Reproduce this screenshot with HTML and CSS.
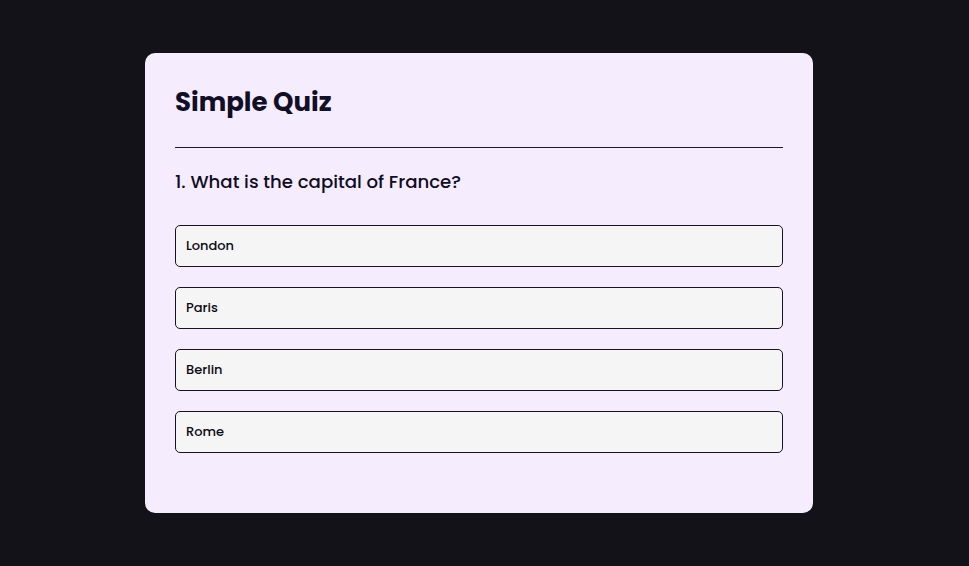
FILE: index.html
```html
<!DOCTYPE html>
<html lang="en">
<head>
<meta charset="utf-8">
<title>Simple Quiz</title>
<link rel="stylesheet" href="styles.css">
</head>
<body>
<div class="page">
  <div class="card">
    <h1 class="title">Simple Quiz</h1>
    <div class="quiz">
      <h2 class="question">1. What is the capital of France?</h2>
      <div class="answers">
        <button class="answer">London</button>
        <button class="answer">Paris</button>
        <button class="answer">Berlin</button>
        <button class="answer">Rome</button>
      </div>
    </div>
  </div>
</div>
</body>
</html>
```
FILE: styles.css
```css
* { box-sizing: border-box; }
html, body { margin: 0; padding: 0; }
body {
  background: #131218;
  font-family: "Poppins", Inter, "Open Sans", sans-serif;
}
.page {
  width: 969px;
  height: 566px;
  display: flex;
  align-items: center;
  justify-content: center;
  padding-right: 11px;
}
.card {
  width: 668px;
  height: 460px;
  background: #f5ecfe;
  border-radius: 10px;
  padding: 30px 30px 60px;
}
.title {
  margin: 0;
  font-size: 26px;
  line-height: 38px;
  font-weight: 700;
  color: #110f26;
  padding-bottom: 26px;
  border-bottom: 1px solid #1d1a24;
}
.quiz { padding-top: 20px; }
.question {
  margin: 0;
  font-size: 18.15px;
  line-height: 28px;
  font-weight: 500;
  color: #0f0d1f;
}
.answers {
  margin-top: 29px;
  display: flex;
  flex-direction: column;
  gap: 20px;
}
.answer {
  display: block;
  width: 100%;
  height: 42px;
  text-align: left;
  background: #f5f5f5;
  border: 1px solid #1a1122;
  border-radius: 5px;
  padding: 0 10px;
  font-family: inherit;
  font-size: 13px;
  font-weight: 500;
  color: #0c0a14;
}
```
